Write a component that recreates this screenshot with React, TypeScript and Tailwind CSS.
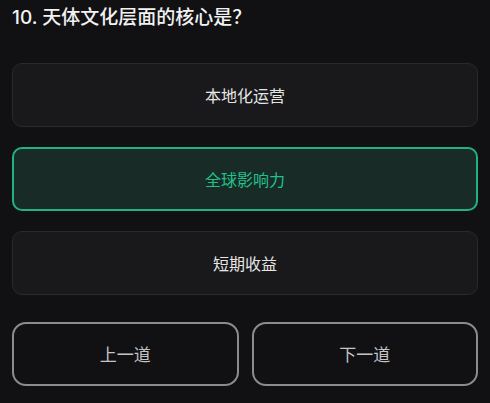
import React from "react";

const font = { fontFamily: '"Noto Sans CJK SC", "Noto Sans", sans-serif' };

export default function App() {
  const options = ["本地化运营", "全球影响力", "短期收益"];
  const selected = 1;
  return (
    <div className="w-[490px] h-[403px] bg-[#111114] px-3 pt-[4px] overflow-hidden" style={font}>
      <h1
        className="text-[19px] leading-[28px] font-medium text-[#f2f2f2]"
        style={{ fontFamily: 'Inter, "Noto Sans CJK SC", sans-serif' }}
      >
        10. 天体文化层面的核心是？
      </h1>
      <div className="mt-[31px] flex flex-col gap-[20px]">
        {options.map((o, i) =>
          i === selected ? (
            <div
              key={o}
              className="h-[64px] rounded-[10px] border-2 border-[#20b283] bg-[#182b26] flex items-center justify-center text-[16px] text-[#22c08d]"
            >
              {o}
            </div>
          ) : (
            <div
              key={o}
              className="h-[64px] rounded-[10px] border border-[#2a2a2e] bg-[#19191b] flex items-center justify-center text-[16px] text-[#e6e6e6]"
            >
              {o}
            </div>
          )
        )}
      </div>
      <div className="mt-[27px] grid grid-cols-2 gap-[13px]">
        <button className="h-[64px] rounded-[14px] border-2 border-[#8c8c8e] bg-transparent text-[17px] text-[#c4c4c4]">上一道</button>
        <button className="h-[64px] rounded-[14px] border-2 border-[#8c8c8e] bg-transparent text-[17px] text-[#c4c4c4]">下一道</button>
      </div>
    </div>
  );
}
